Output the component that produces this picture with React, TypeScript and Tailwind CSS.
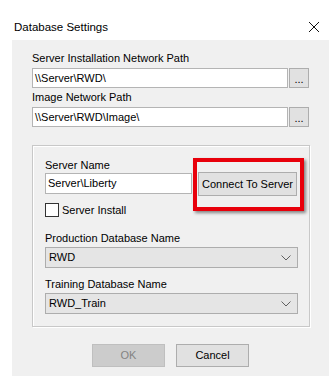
const font = { fontFamily: '"Liberation Sans", Arial, sans-serif' }

function PathRow({ label, value }: { label: string; value: string }) {
  return (
    <div className="flex flex-col">
      <div className="h-[16px] leading-[16px] text-[11px] text-black">{label}</div>
      <div className="mt-[2px] flex gap-[1px]">
        <div className="w-[256px] h-[20px] bg-white border border-[#b4b4b4] px-[2px] text-[11px] leading-[18px] text-black">
          {value}
        </div>
        <div className="w-[20px] h-[20px] bg-[#e1e1e1] border border-[#adadad] flex items-end justify-center pb-[4px]">
          <span className="text-[11px] leading-[8px] text-black">...</span>
        </div>
      </div>
    </div>
  )
}

function SelectBox({ value }: { value: string }) {
  return (
    <div className="w-[253px] h-[21px] bg-[#e5e5e5] border border-[#adadad] flex items-center justify-between pl-[3px] pr-[6px]">
      <span className="text-[11px] text-black">{value}</span>
      <svg width="10" height="6" viewBox="0 0 10 6">
        <path d="M0.5 0.5 L5 5 L9.5 0.5" fill="none" stroke="#606060" strokeWidth="1" />
      </svg>
    </div>
  )
}

export default function App() {
  return (
    <div className="w-[335px] h-[383px] bg-white overflow-hidden" style={font}>
      <div className="h-[40px] flex items-center justify-between pl-[14px] pr-[15px] pt-[14px]">
        <span className="text-[11.5px] leading-[16px] text-black">Database Settings</span>
        <svg width="12" height="12" viewBox="0 0 12 12">
          <path d="M1 1 L11 11 M11 1 L1 11" stroke="#111" strokeWidth="1" />
        </svg>
      </div>
      <div className="ml-[12px] mr-[6px] h-[336px] bg-[#f0f0f0] pl-[20px] pt-[10px]">
        <PathRow label="Server Installation Network Path" value="\\Server\RWD\" />
        <div className="mt-[1px]">
          <PathRow label="Image Network Path" value="\\Server\RWD\Image\" />
        </div>

        <div className="relative mt-[18px] w-[278px] h-[182px] border border-[#c8c8c8] shadow-[inset_1px_1px_0_#fff,1px_1px_0_#fff] pl-[12px] pt-[11px]">
          <div className="h-[16px] leading-[16px] text-[11px] text-black">Server Name</div>
          <div className="flex items-start gap-[6px]">
            <div className="w-[147px] h-[21px] bg-white border border-[#b4b4b4] px-[2px] text-[11px] leading-[19px] text-black">
              Server\Liberty
            </div>
            <div className="-mt-[1px] w-[99px] h-[24px] bg-[#e1e1e1] border border-[#adadad] flex items-center justify-center text-[11px] text-black">
              Connect To Server
            </div>
          </div>
          <div className="absolute left-[160px] top-[12px] w-[111px] h-[53px] border-[4px] border-[#e8000b] shadow-[2px_2px_3px_rgba(0,0,0,0.45)]" />

          <div className="flex items-center h-[16px] mt-[6px] gap-[3px]">
            <div className="w-[14px] h-[14px] bg-white border border-[#333]" />
            <span className="text-[11px] text-black">Server Install</span>
          </div>

          <div className="mt-[12px] h-[16px] leading-[16px] text-[11px] text-black">Production Database Name</div>
          <div className="mt-[1px]">
            <SelectBox value="RWD" />
          </div>
          <div className="mt-[8px] h-[16px] leading-[16px] text-[11px] text-black">Training Database Name</div>
          <div className="mt-[1px]">
            <SelectBox value="RWD_Train" />
          </div>
        </div>

        <div className="flex gap-[11px] ml-[60px] mt-[17px]">
          <div className="w-[73px] h-[23px] bg-[#cccccc] border border-[#bfbfbf] flex items-center justify-center text-[11px] text-[#838383]">
            OK
          </div>
          <div className="w-[73px] h-[23px] bg-[#e1e1e1] border border-[#adadad] flex items-center justify-center text-[11px] text-black">
            Cancel
          </div>
        </div>
      </div>
    </div>
  )
}
